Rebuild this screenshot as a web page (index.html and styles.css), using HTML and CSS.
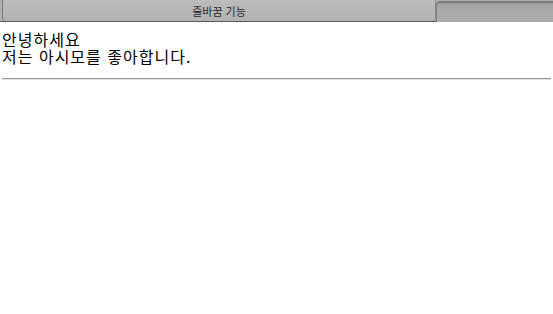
FILE: index.html
```html
<!DOCTYPE html>
<html lang="ko">
<head>
<meta charset="utf-8">
<link rel="stylesheet" href="styles.css">
</head>
<body>
<div class="tabbar">
  <div class="tab active"><span class="tab-label">줄바꿈 기능</span></div>
  <div class="tab inactive"></div>
</div>
<div class="content">
  <p class="text">안녕하세요<br>저는 아시모를 좋아합니다.</p>
  <hr class="rule">
</div>
</body>
</html>
```
FILE: styles.css
```css
html, body {
  margin: 0;
  padding: 0;
  background: #ffffff;
}
.tabbar {
  display: flex;
  height: 22px;
  background: #b0b0b0;
  border-bottom: 1px solid #5a5a5a;
  box-sizing: border-box;
}
.tab {
  height: 100%;
  box-sizing: border-box;
}
.tab.active {
  flex: 0 0 434px;
  display: flex;
  align-items: center;
  justify-content: center;
  background: linear-gradient(#bcbcbc, #b2b2b2);
  border-left: 1px solid #7a7a7a;
  border-right: 1px solid #8a8a8a;
  border-bottom-left-radius: 4px;
  border-bottom-right-radius: 4px;
  margin-left: 2px;
}
.tab.inactive {
  flex: 1;
  background: linear-gradient(#9c9c9c, #aaaaaa 30%, #acacac);
  border-top: 2px solid #7c7c7c;
  border-left: 1px solid #7a7a7a;
  border-top-left-radius: 4px;
  margin-top: 1px;
}
.tab-label {
  font-family: "Noto Sans CJK KR", "Noto Sans", sans-serif;
  font-size: 11px;
  color: #2a2a2a;
}
.content {
  padding: 0 2px;
}
.text {
  margin: 9px 0 0 0;
  font-family: "Noto Sans CJK KR", sans-serif;
  font-size: 16px;
  line-height: 17px;
  letter-spacing: 1px;
  color: #000;
}
.rule {
  margin: 13px 0 0 0;
  border: 0;
  border-top: 1px solid #999;
  border-bottom: 1px solid #e0e0e0;
  height: 0;
}
```
